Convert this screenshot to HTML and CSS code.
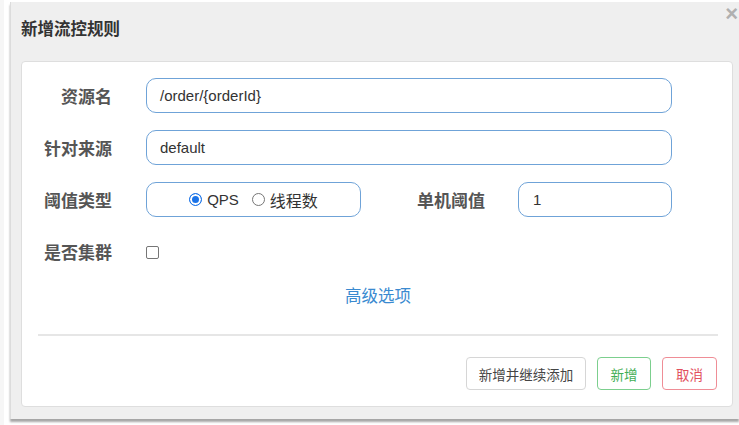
FILE: index.html
```html
<!DOCTYPE html>
<html lang="zh">
<head>
<meta charset="utf-8">
<link rel="stylesheet" href="styles.css">
</head>
<body>
<div class="page">
  <div class="dialog">
    <div class="header">
      <h3 class="title">新增流控规则</h3>
      <span class="close">&times;</span>
    </div>
    <div class="panel">
      <div class="row">
        <label class="label">资源名</label>
        <div class="input wide">/order/{orderId}</div>
      </div>
      <div class="row">
        <label class="label">针对来源</label>
        <div class="input wide">default</div>
      </div>
      <div class="row">
        <label class="label">阈值类型</label>
        <div class="input radios">
          <span class="radio on"></span><span class="rtext">QPS</span>
          <span class="radio"></span><span class="rtext cjk">线程数</span>
        </div>
        <label class="label label2">单机阈值</label>
        <div class="input small">1</div>
      </div>
      <div class="row row4">
        <label class="label">是否集群</label>
        <span class="check"></span>
      </div>
      <div class="adv"><a class="link">高级选项</a></div>
      <div class="divider"></div>
      <div class="buttons">
        <button class="btn">新增并继续添加</button>
        <button class="btn green">新增</button>
        <button class="btn red">取消</button>
      </div>
    </div>
  </div>
</div>
</body>
</html>
```

FILE: styles.css
```css
html, body {
  margin: 0;
  padding: 0;
  background: #ffffff;
  width: 739px;
  height: 425px;
  overflow: hidden;
  font-family: "Liberation Sans", "Noto Sans CJK SC", sans-serif;
}
.page {
  padding-top: 2px;
  padding-left: 4px;
  background: linear-gradient(to right, #f6f6f6 0, #f6f6f6 4px, #ffffff 4px);
  height: 425px;
  box-sizing: border-box;
}
.dialog {
  position: relative;
  margin-left: 6px;
  width: 728px;
  height: 417px;
  background: #efefef;
  border-left: 1px solid #dcdcdc;
  box-shadow: 0 3px 2px rgba(0, 0, 0, 0.35);
  display: flex;
  flex-direction: column;
}
.header {
  height: 59px;
  padding-left: 10px;
  box-sizing: border-box;
}
.title {
  margin: 0;
  padding-top: 15px;
  font-family: "Noto Sans CJK SC", sans-serif;
  font-size: 16.5px;
  font-weight: bold;
  color: #333;
  line-height: 22px;
}
.close {
  position: absolute;
  right: 1px;
  top: 1px;
  font-size: 22px;
  line-height: 22px;
  color: #b0b0b0;
  font-weight: bold;
  font-family: "Liberation Sans", sans-serif;
}
.panel {
  margin: 0 6px 0 10px;
  height: 346px;
  background: #fff;
  border: 1px solid #dedede;
  border-radius: 4px;
  box-sizing: border-box;
  padding: 16px 14px 0 16px;
  display: flex;
  flex-direction: column;
}
.row {
  display: flex;
  align-items: center;
  height: 35px;
  margin-bottom: 17px;
}
.label {
  width: 74px;
  text-align: right;
  font-family: "Noto Sans CJK SC", sans-serif;
  font-weight: bold;
  font-size: 17px;
  color: #555;
  margin-right: 34px;
  flex-shrink: 0;
}
.label2 {
  width: 124px;
  margin-right: 33px;
}
.input {
  height: 35px;
  box-sizing: border-box;
  border: 1px solid #6fa3d8;
  border-radius: 10px;
  padding: 0 13px;
  display: flex;
  align-items: center;
  font-size: 15px;
  color: #333;
}
.wide { width: 526px; }
.radios {
  width: 215px;
  height: 35px;
  justify-content: center;
  padding: 0;
}
.small { width: 154px; padding-left: 14px; }
.radio {
  width: 11px;
  height: 11px;
  border: 1px solid #767676;
  border-radius: 50%;
  box-sizing: content-box;
  margin-right: 5px;
}
.radio.on {
  border-color: #1a73e8;
  background: #1a73e8;
  box-shadow: inset 0 0 0 2px #fff;
}
.rtext { margin-right: 13px; font-size: 15px; color: #333; }
.rtext.cjk { margin-right: 0; font-family: "Noto Sans CJK SC", sans-serif; font-size: 16px; }
.check {
  width: 11px;
  height: 11px;
  border: 1px solid #767676;
  border-radius: 2px;
  margin-top: 2px;
}
.adv {
  text-align: center;
  margin-top: -3px;
  height: 24px;
}
.link {
  font-family: "Noto Sans CJK SC", sans-serif;
  font-size: 16.5px;
  color: #3a8ad0;
  line-height: 24px;
}
.divider {
  margin-top: 27px;
  height: 2px;
  background: #e6e6e6;
}
.buttons {
  display: flex;
  justify-content: flex-end;
  gap: 11px;
  margin-top: 21px;
  padding-right: 1px;
}
.btn {
  height: 33px;
  box-sizing: border-box;
  border: 1px solid #d6d6d6;
  border-radius: 4px;
  background: #fff;
  font-family: "Noto Sans CJK SC", sans-serif;
  font-size: 13.5px;
  color: #444;
  padding: 0;
  white-space: nowrap;
}
.btn:first-child { width: 120px; }
.green { border-color: #7ccf8e; color: #3fae55; width: 54px; }
.red { border-color: #ef8d96; color: #e2505d; width: 55px; }
```
